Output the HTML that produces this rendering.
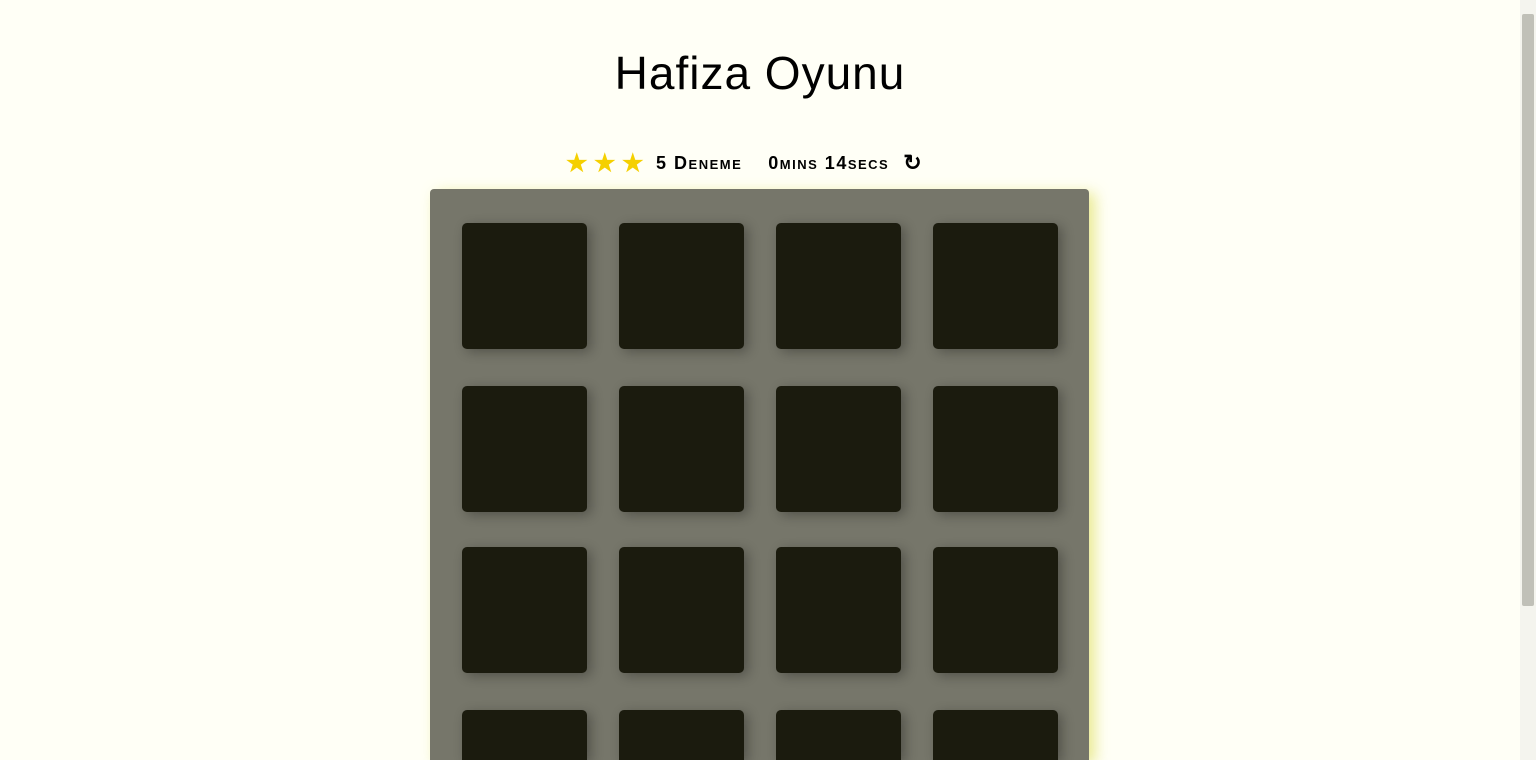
<!DOCTYPE html>
<html><head><style>
html,body{margin:0;height:760px;overflow:hidden;background:#fffff6;font-family:"Liberation Sans",sans-serif;}
.wrap{position:relative;width:1536px;height:760px;overflow:hidden;}
h1{position:absolute;top:46px;left:0;width:1520px;text-align:center;margin:0;font-size:46px;font-weight:normal;color:#000;letter-spacing:1px;}
.score{position:absolute;top:150px;left:566px;height:26px;display:flex;align-items:center;font-size:18px;font-weight:bold;font-variant:small-caps;color:#000;letter-spacing:1.5px;}
.star{color:#f5d000;font-size:24px;margin-right:5px}
.deck{position:absolute;left:430px;top:189px;width:659px;height:571px;background:#76766a;border-radius:4px 4px 0 0;box-shadow:6px 4px 14px rgba(220,220,80,.6);overflow:hidden;}
.card{position:absolute;width:125px;height:126px;background:#1b1b0e;border-radius:5px;box-shadow:4px 3px 12px rgba(0,0,0,.3);}
.sb{position:absolute;right:0;top:0;width:16px;height:760px;background:#f4f4ee}
.th{position:absolute;right:2px;top:14px;width:12px;height:592px;background:#c0c0b8;border-radius:2px}
</style></head><body><div class="wrap">
<h1>Hafiza Oyunu</h1>
<div class="score"><span class="star">★</span><span class="star">★</span><span class="star">★</span><span style="margin:0 26px 0 6px">5 Deneme</span><span>0mins 14secs</span><span style="margin-left:14px;font-size:22px">↻</span></div>
<div class="deck">
<div class="card" style="left:32px;top:34px"></div><div class="card" style="left:189px;top:34px"></div><div class="card" style="left:346px;top:34px"></div><div class="card" style="left:503px;top:34px"></div>
<div class="card" style="left:32px;top:197px"></div><div class="card" style="left:189px;top:197px"></div><div class="card" style="left:346px;top:197px"></div><div class="card" style="left:503px;top:197px"></div>
<div class="card" style="left:32px;top:358px"></div><div class="card" style="left:189px;top:358px"></div><div class="card" style="left:346px;top:358px"></div><div class="card" style="left:503px;top:358px"></div>
<div class="card" style="left:32px;top:521px;height:50px;border-radius:5px 5px 0 0"></div><div class="card" style="left:189px;top:521px;height:50px;border-radius:5px 5px 0 0"></div><div class="card" style="left:346px;top:521px;height:50px;border-radius:5px 5px 0 0"></div><div class="card" style="left:503px;top:521px;height:50px;border-radius:5px 5px 0 0"></div>
</div>
<div class="sb"><div class="th"></div></div>
</div></body></html>
